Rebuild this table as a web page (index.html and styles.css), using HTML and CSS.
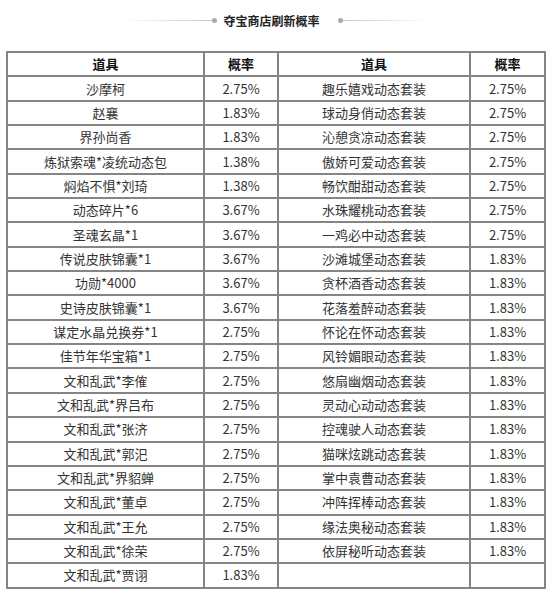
FILE: index.html
```html
<!DOCTYPE html>
<html lang="zh-CN">
<head>
    <meta charset="UTF-8">
    <meta name="viewport" content="width=device-width, initial-scale=1.0">
    <title>夺宝商店刷新概率</title>
    <link rel="stylesheet" href="styles.css">
</head>
<body>
    <!-- 标题 -->
    <div class="title-bar">
        <span class="title-line left"></span>
        <span class="title-dot"></span>
        <span class="title-text">夺宝商店刷新概率</span>
        <span class="title-dot"></span>
        <span class="title-line right"></span>
    </div>

    <!-- 概率表 -->
    <table class="rate-table">
        <colgroup>
            <col class="col-name">
            <col class="col-rate">
            <col class="col-name2">
            <col class="col-rate2">
        </colgroup>
        <tr class="head">
            <td>道具</td><td>概率</td><td>道具</td><td>概率</td>
        </tr>
        <tr><td>沙摩柯</td><td>2.75%</td><td>趣乐嬉戏动态套装</td><td>2.75%</td></tr>
        <tr><td>赵襄</td><td>1.83%</td><td>球动身俏动态套装</td><td>2.75%</td></tr>
        <tr><td>界孙尚香</td><td>1.83%</td><td>沁憩贪凉动态套装</td><td>2.75%</td></tr>
        <tr><td>炼狱索魂*凌统动态包</td><td>1.38%</td><td>傲娇可爱动态套装</td><td>2.75%</td></tr>
        <tr><td>焖焰不惧*刘琦</td><td>1.38%</td><td>畅饮酣甜动态套装</td><td>2.75%</td></tr>
        <tr><td>动态碎片*6</td><td>3.67%</td><td>水珠耀桃动态套装</td><td>2.75%</td></tr>
        <tr><td>圣魂玄晶*1</td><td>3.67%</td><td>一鸡必中动态套装</td><td>2.75%</td></tr>
        <tr><td>传说皮肤锦囊*1</td><td>3.67%</td><td>沙滩城堡动态套装</td><td>1.83%</td></tr>
        <tr><td>功勋*4000</td><td>3.67%</td><td>贪杯酒香动态套装</td><td>1.83%</td></tr>
        <tr><td>史诗皮肤锦囊*1</td><td>3.67%</td><td>花落羞醉动态套装</td><td>1.83%</td></tr>
        <tr><td>谋定水晶兑换券*1</td><td>2.75%</td><td>怀论在怀动态套装</td><td>1.83%</td></tr>
        <tr><td>佳节年华宝箱*1</td><td>2.75%</td><td>风铃媚眼动态套装</td><td>1.83%</td></tr>
        <tr><td>文和乱武*李傕</td><td>2.75%</td><td>悠扇幽烟动态套装</td><td>1.83%</td></tr>
        <tr><td>文和乱武*界吕布</td><td>2.75%</td><td>灵动心动动态套装</td><td>1.83%</td></tr>
        <tr><td>文和乱武*张济</td><td>2.75%</td><td>控魂驶人动态套装</td><td>1.83%</td></tr>
        <tr><td>文和乱武*郭汜</td><td>2.75%</td><td>猫咪炫跳动态套装</td><td>1.83%</td></tr>
        <tr><td>文和乱武*界貂蝉</td><td>2.75%</td><td>掌中袁曹动态套装</td><td>1.83%</td></tr>
        <tr><td>文和乱武*董卓</td><td>2.75%</td><td>冲阵挥棒动态套装</td><td>1.83%</td></tr>
        <tr><td>文和乱武*王允</td><td>2.75%</td><td>缘法奥秘动态套装</td><td>1.83%</td></tr>
        <tr><td>文和乱武*徐荣</td><td>2.75%</td><td>依屏秘听动态套装</td><td>1.83%</td></tr>
        <tr><td>文和乱武*贾诩</td><td>1.83%</td><td></td><td></td></tr>
    </table>
</body>
</html>
```
FILE: styles.css
```css
body{
    margin: 0;
    background-color: #fff;
    font-family: "Noto Sans CJK SC", "Noto Sans", sans-serif;
    color: #333;
}

/* 标题 */
.title-bar{
    height: 40px;
    display: flex;
    align-items: center;
    justify-content: center;
    padding-left: 2px;
}

.title-text{
    font-size: 12px;
    font-weight: bold;
    color: #222;
    margin: 0 18px 0 6px;
}

.title-line{
    width: 88px;
    height: 1px;
}

.title-line.left{
    background: linear-gradient(to right, rgba(200,200,200,0), #c8c8c8);
}

.title-line.right{
    background: linear-gradient(to left, rgba(200,200,200,0), #c8c8c8);
}

.title-dot{
    width: 5px;
    height: 5px;
    border-radius: 50%;
    background-color: #aaa;
}

/* 概率表 */
.rate-table{
    width: 540px;
    margin: 11px 0 0 6px;
    border-collapse: collapse;
    table-layout: fixed;
    font-size: 13px;
}

.col-name{
    width: 197px;
}

.col-rate{
    width: 74px;
}

.col-name2{
    width: 192px;
}

.rate-table td{
    border: 2px solid #858585;
    height: 22.35px;
    padding: 0;
    text-align: center;
    line-height: 18px;
    white-space: nowrap;
}

.rate-table .head td{
    font-weight: bold;
    color: #111;
}
```
